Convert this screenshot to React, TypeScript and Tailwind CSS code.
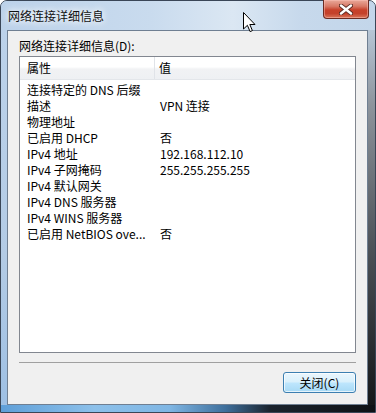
const rows: [string, string][] = [
  ["连接特定的 DNS 后缀", ""],
  ["描述", "VPN 连接"],
  ["物理地址", ""],
  ["已启用 DHCP", "否"],
  ["IPv4 地址", "192.168.112.10"],
  ["IPv4 子网掩码", "255.255.255.255"],
  ["IPv4 默认网关", ""],
  ["IPv4 DNS 服务器", ""],
  ["IPv4 WINS 服务器", ""],
  ["已启用 NetBIOS ove...", "否"],
];

function CloseGlyph() {
  return (
    <svg width="14" height="11" viewBox="0 0 14 11">
      <path
        d="M2 1.5 L12 9.5 M12 1.5 L2 9.5"
        stroke="#5a2a22"
        strokeWidth="4.2"
        strokeLinecap="round"
      />
      <path
        d="M2 1.5 L12 9.5 M12 1.5 L2 9.5"
        stroke="#ffffff"
        strokeWidth="2.4"
        strokeLinecap="round"
      />
    </svg>
  );
}

function Cursor() {
  return (
    <svg width="13" height="21" viewBox="0 0 13 21">
      <path
        d="M0.5 0.5 L0.5 17 L4.4 13.3 L7.1 19.6 L9.4 18.6 L6.8 12.5 L12 12.5 Z"
        fill="#ffffff"
        stroke="#000000"
        strokeWidth="1"
        strokeLinejoin="round"
      />
    </svg>
  );
}

export default function App() {
  return (
    <div className="relative h-[413px] w-[376px] overflow-hidden font-['Noto_Sans_CJK_SC',sans-serif] text-[12px] text-black">
      <div className="flex h-full w-full flex-col overflow-hidden rounded-t-[7px] border border-[#3a4657] bg-[#bcd2ea]">
        {/* title bar */}
        <div className="flex h-[29px] shrink-0 items-center bg-[linear-gradient(90deg,#bcd2ea_0%,#c9dbee_40%,#dbe7f3_62%,#c7d9ec_80%,#c3d6ea_100%)] pl-[7px]">
          <span className="leading-[16px] text-[#111] [text-shadow:0_0_6px_#ffffff,0_0_10px_#ffffff]">
            网络连接详细信息
          </span>
        </div>

        <div className="flex min-h-0 flex-1">
          {/* left frame */}
          <div className="w-[6px] shrink-0 bg-[linear-gradient(180deg,#bcd2ea_0%,#b3cbe5_60%,#9ec0e4_100%)]" />

          {/* client area */}
          <div className="flex flex-1 flex-col border border-[#6f7f92] bg-[#f0f0f0] px-[11px] pt-[7px]">
            <div className="leading-[16px]">网络连接详细信息(D):</div>

            <div className="mt-[2px] flex h-[297px] flex-col border border-[#828790] bg-white">
              <div className="flex h-[23px] shrink-0 items-center border-b border-[#e3e6ea] bg-[linear-gradient(180deg,#ffffff_0%,#ffffff_45%,#f1f2f4_55%,#eef0f3_100%)]">
                <div className="flex h-full w-[135px] items-center border-r border-[#e0e3e8] pl-[7px]">
                  属性
                </div>
                <div className="pl-[4px]">值</div>
              </div>
              <div className="pt-[2px]">
                {rows.map(([name, value]) => (
                  <div key={name} className="grid h-[16px] grid-cols-[136px_1fr] leading-[16px]">
                    <div className="whitespace-nowrap pl-[7px]">{name}</div>
                    <div className="whitespace-nowrap pl-[4px]">{value}</div>
                  </div>
                ))}
              </div>
            </div>

            <div className="mt-[9px] h-[2px] border-t border-[#a0a0a0] border-b-white" />

            <div className="mt-[8px] flex justify-end">
              <button
                type="button"
                className="flex h-[21px] w-[73px] items-center justify-center rounded-[3px] border border-[#3c7fb1] bg-[linear-gradient(180deg,#eaf6fd_0%,#d9f0fc_48%,#bee6fd_52%,#a7d9f5_100%)] leading-[16px] shadow-[inset_0_0_0_1px_rgba(255,255,255,0.7)]"
              >
                关闭(C)
              </button>
            </div>
          </div>

          {/* right frame */}
          <div className="w-[7px] shrink-0 bg-[linear-gradient(180deg,#b7c6d6_0%,#8d949c_20%,#4a4f55_60%,#151719_100%)]" />
        </div>

        {/* bottom frame */}
        <div className="h-[7px] shrink-0 bg-[linear-gradient(90deg,#5f9fd8_0%,#8cc0ea_25%,#7fb6e4_45%,#3e6f9c_60%,#1a232d_72%,#0e1115_100%)]" />
      </div>

      {/* close button */}
      <div className="absolute right-[7px] top-0 flex h-[19px] w-[46px] items-center justify-center rounded-b-[4px] border border-t-0 border-[#6b2b22] bg-[linear-gradient(180deg,#e9a99a_0%,#d87966_35%,#c7412a_55%,#c4412b_75%,#d97559_100%)] shadow-[inset_0_0_0_1px_rgba(255,200,190,0.45)]">
        <CloseGlyph />
      </div>

      {/* mouse pointer */}
      <div className="absolute left-[243px] top-[12px]">
        <Cursor />
      </div>
    </div>
  );
}
